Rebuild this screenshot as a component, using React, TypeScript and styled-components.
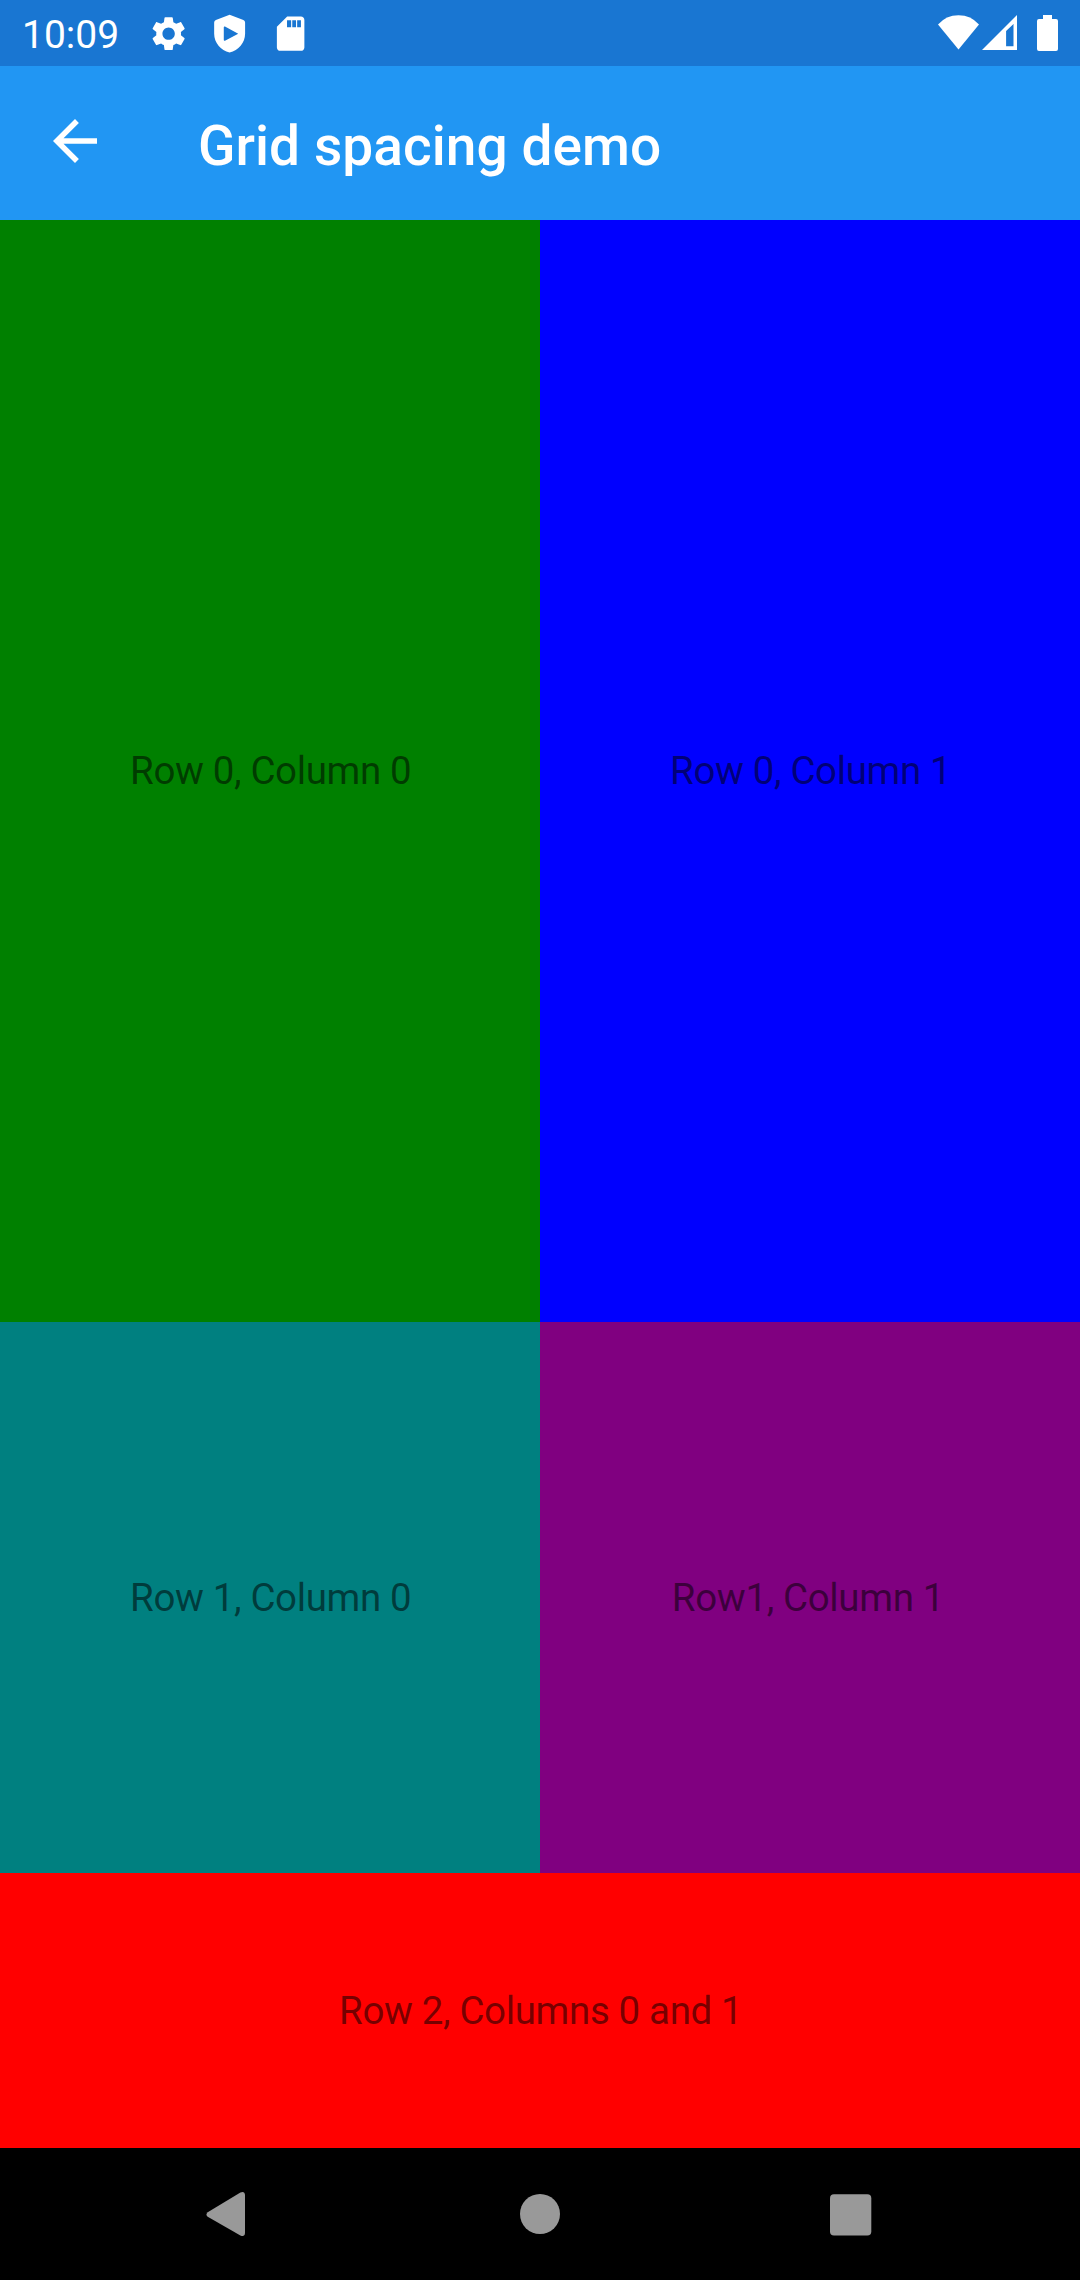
import React from 'react';
import styled, { createGlobalStyle } from 'styled-components';

const GlobalStyle = createGlobalStyle`
  * { box-sizing: border-box; }
  body { margin: 0; font-family: Roboto, sans-serif; background: #000; }
  svg { display: block; flex: none; }
`;

const Screen = styled.div`
  width: 1080px;
  height: 2280px;
  display: flex;
  flex-direction: column;
  overflow: hidden;
`;

const StatusBar = styled.header`
  height: 66px;
  flex: none;
  display: flex;
  align-items: center;
  justify-content: space-between;
  padding: 0 22px;
  background: #1976d2;
  color: #fff;
`;

const StatusGroup = styled.div`
  display: flex;
  align-items: center;
`;

const Notifications = styled(StatusGroup)`
  gap: 19.75px;
  margin-left: 29px;
  padding-top: 1px;
`;

const Clock = styled.time`
  width: 97px;
  font-size: 39px;
  line-height: 46px;
  padding-top: 4px;
  white-space: nowrap;
`;

const AppBar = styled.nav`
  height: 154px;
  flex: none;
  display: flex;
  align-items: center;
  padding: 0 42px;
  background: #2196f3;
  color: #fff;
`;

const BackButton = styled.button`
  display: flex;
  padding: 0;
  margin: 0 90px 4px 0;
  border: 0;
  background: none;
  color: inherit;
`;

const Title = styled.h1`
  margin: 0;
  padding-top: 5px;
  font-size: 55px;
  line-height: 64px;
  font-weight: 500;
  letter-spacing: 0.06px;
  white-space: nowrap;
`;

const Grid = styled.main`
  flex: none;
  display: grid;
  grid-template-columns: 1fr 1fr;
  grid-template-rows: 1102px 551px 275px;
`;

const Cell = styled.section<{ $color: string; $span?: number }>`
  display: flex;
  align-items: center;
  justify-content: center;
  grid-column: span ${(p) => p.$span ?? 1};
  background: ${(p) => p.$color};
`;

const Label = styled.span<{ $trail?: number }>`
  padding-left: 1.4px;
  padding-right: ${(p) => p.$trail ?? 0}px;
  font-size: 38.5px;
  letter-spacing: -0.36px;
  line-height: 46px;
  color: rgba(0, 0, 0, 0.54);
  white-space: nowrap;
`;

const NavBar = styled.footer`
  flex: 1;
  display: flex;
  align-items: center;
  justify-content: space-between;
  padding: 0 208px 0 205px;
  background: #000;
  color: #999;
`;

const cells = [
  { text: 'Row 0, Column 0', color: '#008000' },
  { text: 'Row 0, Column 1', color: '#0000ff' },
  { text: 'Row 1, Column 0', color: '#008080' },
  { text: 'Row1, Column 1', color: '#800080', trail: 5.5 },
  { text: 'Row 2, Columns 0 and 1', color: '#ff0000', span: 2 },
];

const Glyph = ({ d }: { d: string }) => (
  <svg width="41.25" height="41.25" viewBox="0 0 24 24" fill="currentColor">
    <path fillRule="evenodd" d={d} />
  </svg>
);

const gear =
  'M19.14 12.94c.04-.3.06-.61.06-.94 0-.32-.02-.64-.07-.94l2.03-1.58c.18-.14.23-.41.12-.61l-1.92-3.32c-.12-.22-.37-.29-.59-.22l-2.39.96c-.5-.38-1.03-.7-1.62-.94l-.36-2.54c-.04-.24-.24-.41-.48-.41h-3.84c-.24 0-.43.17-.47.41l-.36 2.54c-.59.24-1.13.57-1.62.94l-2.39-.96c-.22-.08-.47 0-.59.22L2.74 8.87c-.12.21-.08.47.12.61l2.03 1.58c-.05.3-.09.63-.09.94s.02.64.07.94l-2.03 1.58c-.18.14-.23.41-.12.61l1.92 3.32c.12.22.37.29.59.22l2.39-.96c.5.38 1.03.7 1.62.94l.36 2.54c.05.24.24.41.48.41h3.84c.24 0 .44-.17.47-.41l.36-2.54c.59-.24 1.13-.56 1.62-.94l2.39.96c.22.08.47 0 .59-.22l1.92-3.32c.12-.22.07-.47-.12-.61l-2.01-1.58zM12 15.6c-1.98 0-3.6-1.62-3.6-3.6s1.62-3.6 3.6-3.6 3.6 1.62 3.6 3.6-1.62 3.6-3.6 3.6z';
const shield =
  'M12 1 4 4.1Q3 4.5 3 5.5V12c0 5.2 3.8 9.7 9 11 5.2-1.3 9-5.8 9-11V5.5Q21 4.5 20 4.1zM8.6 8.4Q8.6 7.6 9.3 7.9L17 12 9.3 16.1Q8.6 16.4 8.6 15.6z';
const sdCard =
  'M18 2h-8L4 8v12c0 1.1.9 2 2 2h12c1.1 0 2-.9 2-2V4c0-1.1-.9-2-2-2zM9.9 4.2h2.4v4.1h-2.4zM12.95 4.2h2.2v4.1h-2.2zM15.8 4.2h2.2v4.1h-2.2z';

export default function App() {
  return (
    <Screen>
      <GlobalStyle />
      <StatusBar>
        <StatusGroup>
          <Clock>10:09</Clock>
          <Notifications>
            <Glyph d={gear} />
            <Glyph d={shield} />
            <Glyph d={sdCard} />
          </Notifications>
        </StatusGroup>
        <svg width="121" height="38" viewBox="937 14 121 38" fill="currentColor">
          <path d="M938 24.5Q946 15.2 958.5 15.2T979 24.5L958.5 49.5Z" />
          <path fillRule="evenodd" d="M1017 15V50H982ZM1013.5 24L1006.1 31V46.3H1013.5Z" />
          <path d="M1043 15H1052V19H1056Q1058 19 1058 21V49Q1058 51 1056 51H1039Q1037 51 1037 49V21Q1037 19 1039 19H1043Z" />
        </svg>
      </StatusBar>
      <AppBar>
        <BackButton aria-label="Back">
          <svg width="66" height="66" viewBox="0 0 24 24" fill="currentColor">
            <path d="M20 11H7.83l5.59-5.59L12 4l-8 8 8 8 1.41-1.41L7.83 13H20v-2z" />
          </svg>
        </BackButton>
        <Title>Grid spacing demo</Title>
      </AppBar>
      <Grid>
        {cells.map((cell) => (
          <Cell key={cell.text} $color={cell.color} $span={cell.span}>
            <Label $trail={cell.trail}>{cell.text}</Label>
          </Cell>
        ))}
      </Grid>
      <NavBar>
        <svg width="45" height="46" viewBox="0 0 45 46" fill="currentColor">
          <path d="M2.7 21.2 35.4 1.6Q39.6-.2 40 4V42Q39.6 46.2 35.4 44.4L2.7 25.8Q.2 23.5 2.7 21.2Z" />
        </svg>
        <svg width="42" height="42" viewBox="0 0 42 42" fill="currentColor">
          <circle cx="21" cy="21" r="20" />
        </svg>
        <svg width="42" height="43" viewBox="0 0 42 43" fill="currentColor">
          <rect x="0" y="1.3" width="41.3" height="41.3" rx="4" />
        </svg>
      </NavBar>
    </Screen>
  );
}
